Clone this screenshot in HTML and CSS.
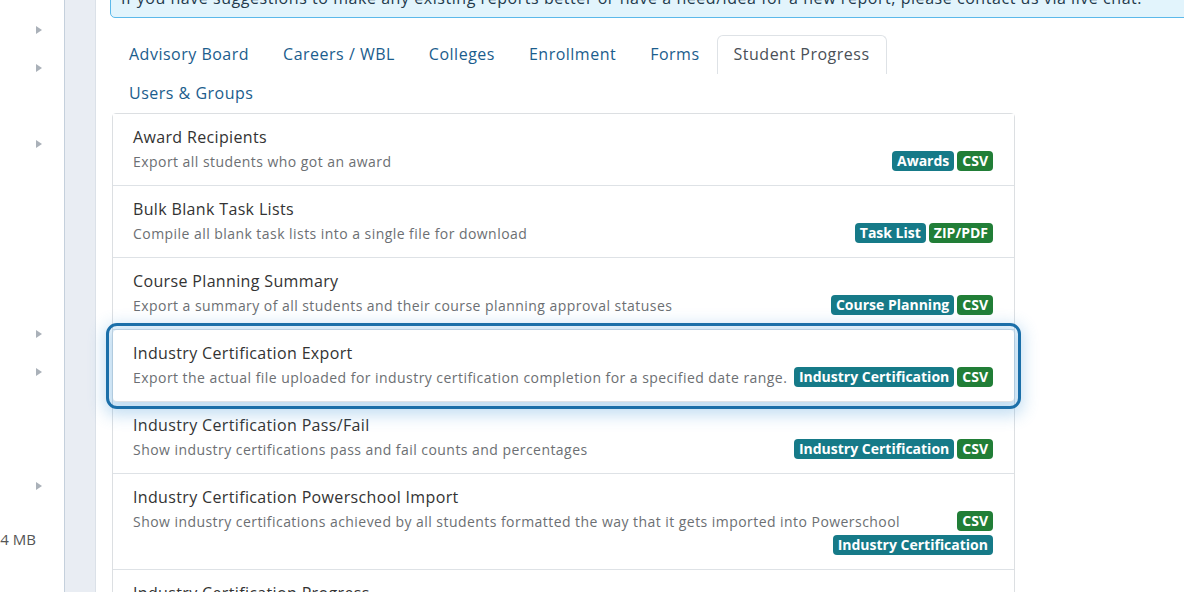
FILE: index.html
```html
<!DOCTYPE html>
<html lang="en">
<head>
  <meta charset="UTF-8" />
  <meta name="viewport" content="width=device-width, initial-scale=1.0"/>
  <title>Reports</title>
  <link rel="stylesheet" href="styles.css">
</head>
<body>

  <!-- Collapsed side menu, labels are off screen -->
  <aside class="sidebar">
    <div class="menu-row"><span class="caret"></span></div>
    <div class="menu-row"><span class="caret"></span></div>
    <div class="menu-row"></div>
    <div class="menu-row"><span class="caret"></span></div>
    <div class="menu-row"></div>
    <div class="menu-row"></div>
    <div class="menu-row"></div>
    <div class="menu-row"></div>
    <div class="menu-row"><span class="caret"></span></div>
    <div class="menu-row"><span class="caret"></span></div>
    <div class="menu-row"></div>
    <div class="menu-row"></div>
    <div class="menu-row"><span class="caret"></span></div>
    <div class="storage">4 MB</div>
  </aside>

  <!-- Thin strip between the menu and the page -->
  <div class="gutter"></div>

  <main class="content">
    <div class="info-banner">
      If you have suggestions to make any existing reports better or have a need/idea for a new report, please contact us via live chat.
    </div>

    <div class="reports">
      <!-- Report categories -->
      <nav class="report-tabs">
        <a href="#" class="tab">Advisory Board</a>
        <a href="#" class="tab">Careers / WBL</a>
        <a href="#" class="tab">Colleges</a>
        <a href="#" class="tab">Enrollment</a>
        <a href="#" class="tab">Forms</a>
        <a href="#" class="tab active">Student Progress</a>
        <a href="#" class="tab">Users &amp; Groups</a>
      </nav>

      <!-- Reports in the selected category -->
      <div class="report-list">
        <a href="#" class="report-item">
          <div class="report-title">Award Recipients</div>
          <div class="report-desc">Export all students who got an award
            <span class="badge badge-file">CSV</span><span class="badge badge-type">Awards</span>
          </div>
        </a>
        <a href="#" class="report-item">
          <div class="report-title">Bulk Blank Task Lists</div>
          <div class="report-desc">Compile all blank task lists into a single file for download
            <span class="badge badge-file">ZIP/PDF</span><span class="badge badge-type">Task List</span>
          </div>
        </a>
        <a href="#" class="report-item">
          <div class="report-title">Course Planning Summary</div>
          <div class="report-desc">Export a summary of all students and their course planning approval statuses
            <span class="badge badge-file">CSV</span><span class="badge badge-type">Course Planning</span>
          </div>
        </a>
        <a href="#" class="report-item focused">
          <div class="report-title">Industry Certification Export</div>
          <div class="report-desc">Export the actual file uploaded for industry certification completion for a specified date range.
            <span class="badge badge-file">CSV</span><span class="badge badge-type">Industry Certification</span>
          </div>
        </a>
        <a href="#" class="report-item">
          <div class="report-title">Industry Certification Pass/Fail</div>
          <div class="report-desc">Show industry certifications pass and fail counts and percentages
            <span class="badge badge-file">CSV</span><span class="badge badge-type">Industry Certification</span>
          </div>
        </a>
        <a href="#" class="report-item">
          <div class="report-title">Industry Certification Powerschool Import</div>
          <div class="report-desc">Show industry certifications achieved by all students formatted the way that it gets imported into Powerschool
            <span class="badge badge-file">CSV</span><span class="badge badge-type badge-next-line">Industry Certification</span>
          </div>
        </a>
        <a href="#" class="report-item">
          <div class="report-title">Industry Certification Progress</div>
          <div class="report-desc">Show progress of students toward their industry certifications
            <span class="badge badge-file">CSV</span><span class="badge badge-type">Industry Certification</span>
          </div>
        </a>
      </div>
    </div>
  </main>

</body>
</html>
```

FILE: styles.css
```css
/* Page base */
body {
  font-family: "Open Sans", Arial, sans-serif;
  margin: 0;
  padding: 0;
  background-color: white;
  color: #333;
  display: flex;
  height: 592px;
  overflow: hidden;
}

/* Left menu */
.sidebar {
  width: 64px;
  flex-shrink: 0;
  padding-top: 11px;
  background-color: white;
}

.menu-row {
  height: 38px;
  display: flex;
  align-items: center;
  justify-content: flex-end;
  padding-right: 22px;
}

/* Small grey arrow on expandable menu items */
.caret {
  width: 0;
  height: 0;
  border-top: 4px solid transparent;
  border-bottom: 4px solid transparent;
  border-left: 6px solid #aab1b9;
}

.storage {
  margin-top: 24px;
  text-align: right;
  padding-right: 28px;
  font-size: 15px;
  color: #555;
  line-height: 20px;
}

/* Strip between menu and page */
.gutter {
  width: 30px;
  flex-shrink: 0;
  background-color: #e9edf3;
  border-left: 1px solid #c5d0dc;
  border-right: 1px solid #dbe1e8;
}

/* Main area */
.content {
  flex: 1;
  padding-left: 14px;
  min-width: 0;
}

.info-banner {
  width: 1100px;
  margin-top: -26px;
  padding: 12px 10px 8px;
  background-color: #e2f4fc;
  border: 1px solid #5cb9ea;
  border-radius: 5px;
  color: #233a4c;
  font-size: 16px;
  line-height: 22px;
  letter-spacing: 0.55px;
  white-space: nowrap;
}

.reports {
  width: 903px;
  margin-left: 2px;
  margin-top: 17px;
}

/* Category tabs */
.report-tabs {
  display: flex;
  flex-wrap: wrap;
}

.tab {
  padding: 6px 16px 8px;
  border: 1px solid transparent;
  border-radius: 6px 6px 0 0;
  border-bottom: none;
  color: #1b5d8d;
  text-decoration: none;
  font-size: 16px;
  line-height: 24px;
  letter-spacing: 0.5px;
  height: 39px;
  box-sizing: border-box;
}

.tab.active {
  color: #4a5057;
  border-color: #dee2e6;
}

/* Report list */
.report-list {
  border: 1px solid #dcdfe2;
  border-radius: 4px 4px 0 0;
}

.report-item {
  display: block;
  padding: 11px 21px 10px 20px;
  border-bottom: 1px solid #dee2e6;
  text-decoration: none;
  background-color: white;
}

/* Keyboard focus ring on the selected report */
.report-item.focused {
  position: relative;
  z-index: 1;
  border-radius: 4px;
  outline: 3px solid #1b6fa9;
  outline-offset: 4px;
  box-shadow: 0 4px 16px 9px rgba(55, 145, 212, 0.3);
}

.report-title {
  font-size: 16px;
  line-height: 24px;
  letter-spacing: 0.35px;
  color: #333;
}

.report-desc {
  display: flow-root;
  margin-top: 2px;
  font-size: 14px;
  line-height: 21px;
  letter-spacing: 0.45px;
  color: #6c6f73;
}

/* Tag badges float to the right of the description */
.badge {
  float: right;
  margin: 0 0 4px 3px;
  padding: 0 5px;
  height: 20px;
  line-height: 20px;
  border-radius: 4px;
  color: white;
  font-size: 14px;
  font-weight: bold;
  letter-spacing: 0;
}

/* Drop a badge below the ones before it */
.badge-next-line {
  clear: right;
}

.badge-type {
  background-color: #167a88;
}

.badge-file {
  background-color: #217e37;
}
```
